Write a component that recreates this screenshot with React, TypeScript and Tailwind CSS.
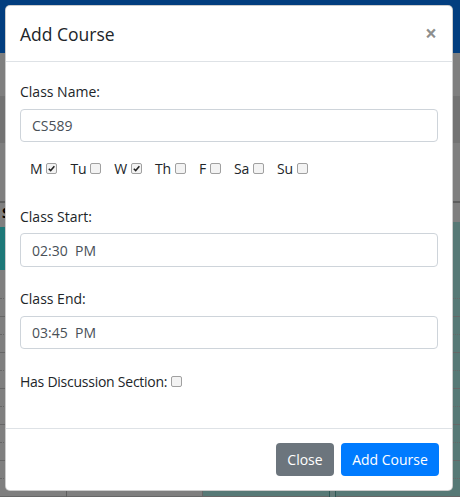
import React from "react";

const days = [
  { label: "M", checked: true },
  { label: "Tu", checked: false },
  { label: "W", checked: true },
  { label: "Th", checked: false },
  { label: "F", checked: false },
  { label: "Sa", checked: false },
  { label: "Su", checked: false },
];

const font = { fontFamily: '"Open Sans", "Noto Sans", sans-serif' };

function Box({ checked }: { checked?: boolean }) {
  return (
    <span className="inline-flex h-[11px] w-[11px] shrink-0 items-center justify-center rounded-[2px] border border-[#a0a0a0] bg-[#f3f3f3]">
      {checked && (
        <svg viewBox="0 0 10 10" className="h-[9px] w-[9px]">
          <path d="M2 5.2 L4.1 7.3 L8.2 2.6" fill="none" stroke="#222" strokeWidth="1.7" />
        </svg>
      )}
    </span>
  );
}

function Lines() {
  return (
    <div className="flex flex-col">
      {Array.from({ length: 12 }, (_, i) => (
        <div
          key={i}
          className={
            i % 2 === 0
              ? "h-[18px] border-b border-dotted border-[#cfcfcf]"
              : "h-[18px] border-b border-[#cfcfcf]"
          }
        />
      ))}
    </div>
  );
}

// page behind the dialog (dimmed by the overlay)
function Backdrop() {
  return (
    <div className="flex h-full flex-col bg-white">
      <div className="h-[53px] shrink-0 bg-[#047cff]" />
      <div className="h-[43px] shrink-0" />
      <div className="h-[47px] shrink-0 bg-[#e6e6e6]" />
      <div className="h-[60px] shrink-0 border-b-2 border-[#bdbdbd]" />
      <div className="h-[19px] shrink-0 pl-[2px] text-[14px] font-bold leading-[19px] text-black">S</div>
      <div className="grid flex-1 grid-cols-[67px_136px_127px_5px_1fr]">
        <div className="flex flex-col border-r border-[#bbb]">
          <div className="h-[5px]" />
          <div className="h-[43px] bg-[#3af0f0]" />
          <div className="h-[11px]" />
          <Lines />
        </div>
        <div className="border-r border-[#ccc] pt-[59px]">
          <Lines />
        </div>
        <div className="border-r border-[#5fb0aa] bg-[#aef2ec] pt-[59px]">
          <Lines />
        </div>
        <div className="bg-[#c8f6f2]" />
        <div className="border-l border-[#5fb0aa] bg-[#aef2ec] pt-[59px]">
          <Lines />
        </div>
      </div>
    </div>
  );
}

export default function App() {
  return (
    <div className="relative h-[497px] w-[460px] overflow-hidden" style={font}>
      <Backdrop />

      <div className="absolute inset-0 bg-black/50">
        <div className="ml-[5px] mt-[5px] flex h-[486px] w-[448px] flex-col rounded-[5px] border border-black/20 bg-white">
          {/* header */}
          <div className="flex h-[56px] shrink-0 items-center justify-between border-b border-[#dee2e6] pl-[14px] pr-[15px]">
            <h5 className="text-[17.5px] font-medium leading-[26px] text-[#212529]">Add Course</h5>
            <span className="text-[21px] font-bold leading-none text-black/45">×</span>
          </div>

          {/* body */}
          <div className="flex-1 px-[14px] pt-[19px] text-[14px] leading-[21px] text-[#212529]">
            <label className="mb-[7px] block">Class Name:</label>
            <div className="flex h-[33px] items-center rounded-[4px] border border-[#ced4da] px-[11px] text-[#495057]">
              CS589
            </div>

            <div className="mt-[16px] flex items-center gap-[13px] pl-[10px] tracking-[-0.2px]">
              {days.map((d) => (
                <span key={d.label} className="flex items-center gap-[4px]">
                  <span>{d.label}</span>
                  <Box checked={d.checked} />
                </span>
              ))}
            </div>

            <label className="mb-[6px] mt-[27px] block">Class Start:</label>
            <div className="flex h-[34px] items-center rounded-[4px] border border-[#ced4da] px-[11px] text-[#495057]">
              02:30&nbsp;&nbsp;PM
            </div>

            <label className="mb-[7px] mt-[21px] block">Class End:</label>
            <div className="flex h-[33px] items-center rounded-[4px] border border-[#ced4da] px-[11px] text-[#495057]">
              03:45&nbsp;&nbsp;PM
            </div>

            <div className="mt-[22px] flex items-center gap-[4px]">
              <span className="tracking-[-0.25px]">Has Discussion Section:</span>
              <Box />
            </div>
          </div>

          {/* footer */}
          <div className="flex h-[62px] shrink-0 items-center justify-end gap-[7px] border-t border-[#dee2e6] pr-[13px]">
            <button className="h-[33px] w-[58px] rounded-[4px] bg-[#6c757d] text-[14px] text-white">Close</button>
            <button className="h-[33px] w-[98px] rounded-[4px] bg-[#007bff] text-[14px] text-white">Add Course</button>
          </div>
        </div>
      </div>
    </div>
  );
}
